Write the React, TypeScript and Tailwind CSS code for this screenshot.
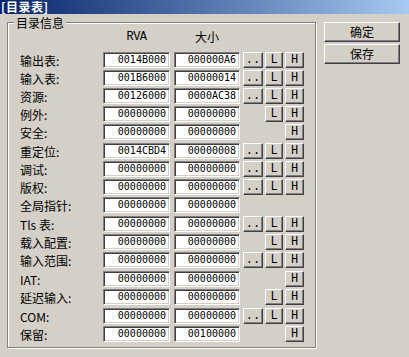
import React from "react";

type Row = { label: string; rva: string; size: string; b: [number, number, number]; tall?: boolean };

const rows: Row[] = [
  { label: "输出表:", rva: "0014B000", size: "000000A6", b: [1, 1, 1] },
  { label: "输入表:", rva: "001B6000", size: "00000014", b: [1, 1, 1] },
  { label: "资源:", rva: "00126000", size: "0000AC38", b: [1, 1, 1] },
  { label: "例外:", rva: "00000000", size: "00000000", b: [0, 1, 1] },
  { label: "安全:", rva: "00000000", size: "00000000", b: [0, 0, 1], tall: true },
  { label: "重定位:", rva: "0014CBD4", size: "00000008", b: [1, 1, 1] },
  { label: "调试:", rva: "00000000", size: "00000000", b: [1, 1, 1] },
  { label: "版权:", rva: "00000000", size: "00000000", b: [1, 1, 1] },
  { label: "全局指针:", rva: "00000000", size: "00000000", b: [0, 0, 0], tall: true },
  { label: "Tls 表:", rva: "00000000", size: "00000000", b: [1, 1, 1] },
  { label: "载入配置:", rva: "00000000", size: "00000000", b: [0, 1, 1] },
  { label: "输入范围:", rva: "00000000", size: "00000000", b: [1, 1, 1], tall: true },
  { label: "IAT:", rva: "00000000", size: "00000000", b: [0, 0, 1] },
  { label: "延迟输入:", rva: "00000000", size: "00000000", b: [0, 1, 1], tall: true },
  { label: "COM:", rva: "00000000", size: "00000000", b: [1, 1, 1] },
  { label: "保留:", rva: "00000000", size: "00100000", b: [0, 0, 1] },
];

const btn =
  "border border-t-white border-l-white border-r-[#404040] border-b-[#404040] shadow-[inset_-1px_-1px_0_#808080] bg-[#d4d0c8] flex items-center justify-center";

const field =
  "h-[16px] bg-white border border-t-[#808080] border-l-[#808080] border-r-white border-b-white shadow-[inset_1px_1px_0_#404040,inset_-1px_-1px_0_#d4d0c8] flex items-center justify-end pr-[3px] font-['DejaVu_Sans_Mono',monospace] text-[10px] leading-none";

function SmallBtn({ show, w, text }: { show: number; w: string; text: string }) {
  if (!show) return <div className={w + " h-[16px]"} />;
  return (
    <div className={btn + " " + w + " h-[16px] font-['Liberation_Mono',monospace] text-[12px] leading-none"}>
      {text}
    </div>
  );
}

export default function App() {
  return (
    <div className="w-[409px] h-[357px] bg-[#d4d0c8] overflow-hidden font-['Noto_Sans_CJK_SC',sans-serif] text-[12px] text-black">
      <div className="h-[14px] bg-linear-to-r from-[#0a246a] to-[#a6caf0] flex items-center pl-[1px]">
        <span className="text-white font-bold text-[12px] leading-none tracking-[0.5px]">[目录表]</span>
      </div>
      <div className="flex">
        <div className="relative ml-[7px] mt-[8px] w-[309px] h-[326px] border border-[#808080] shadow-[inset_1px_1px_0_#fff,1px_1px_0_#fff]">
          <div className="absolute left-[6px] top-[-7px] bg-[#d4d0c8] px-[2px] leading-[13px]">目录信息</div>
          <div className="pl-[12px] pt-[7px]">
            <div className="flex h-[14px] leading-[14px]">
              <div className="w-[83px]" />
              <div className="w-[67px] text-center font-['Liberation_Mono',monospace] text-[12px] tracking-[-0.5px]">RVA</div>
              <div className="w-[66px] ml-[4px] text-center">大小</div>
            </div>
            <div className="mt-[8px] flex flex-col">
              {rows.map((r, i) => (
                <div key={i} className={"flex items-start " + (r.tall ? "h-[19px]" : "h-[18px]")}>
                  <div className="w-[83px] h-[16px] leading-[16px] pt-[1px] whitespace-nowrap">{r.label}</div>
                  <div className={field + " w-[67px]"}>{r.rva}</div>
                  <div className={field + " w-[66px] ml-[4px]"}>{r.size}</div>
                  <div className="ml-[3px] flex">
                    <SmallBtn show={r.b[0]} w="w-[20px]" text=".." />
                    <div className="w-[2px]" />
                    <SmallBtn show={r.b[1]} w="w-[18px]" text="L" />
                    <div className="w-[2px]" />
                    <SmallBtn show={r.b[2]} w="w-[19px]" text="H" />
                  </div>
                </div>
              ))}
            </div>
          </div>
        </div>
        <div className="ml-[8px] mt-[8px] flex flex-col gap-[2px]">
          <div className={btn + " w-[76px] h-[20px]"}>确定</div>
          <div className={btn + " w-[76px] h-[20px]"}>保存</div>
        </div>
      </div>
    </div>
  );
}
